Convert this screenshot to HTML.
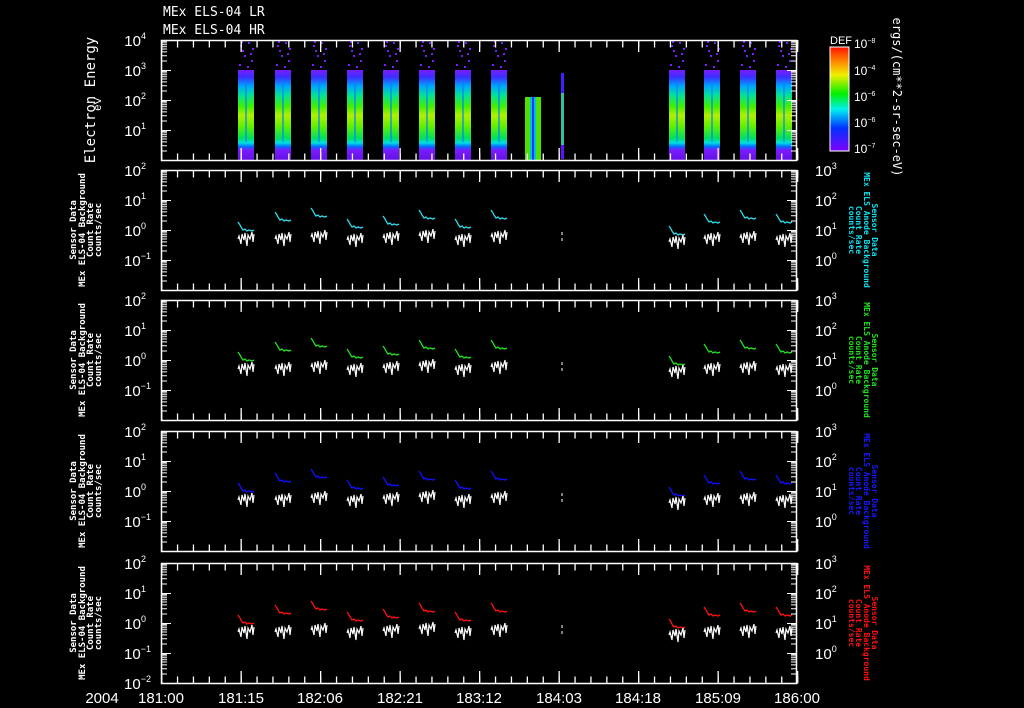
<!DOCTYPE html>
<html><head><meta charset="utf-8"><style>
html,body{margin:0;padding:0;background:#000;width:1024px;height:708px;overflow:hidden}
svg{display:block}
text{font-family:"Liberation Sans","DejaVu Sans",sans-serif;fill:#fff}
.t{font-size:15px;text-anchor:end}
.s{font-size:9px}
.m{font-family:"DejaVu Sans Mono","Liberation Mono",monospace;font-size:13px}
.l{font-family:"DejaVu Sans Mono","Liberation Mono",monospace;font-size:9px;font-weight:bold;text-anchor:middle}
.r{font-family:"DejaVu Sans Mono","Liberation Mono",monospace;font-size:8px;font-weight:bold;text-anchor:middle}
.b{font-size:15px;text-anchor:middle}
</style></head><body>
<svg width="1024" height="708" viewBox="0 0 1024 708" xmlns="http://www.w3.org/2000/svg">
<defs>
<linearGradient id="sp" x1="0" y1="70" x2="0" y2="161" gradientUnits="userSpaceOnUse">
<stop offset="0" stop-color="#7a1cff"/><stop offset="0.08" stop-color="#3a30ff"/><stop offset="0.17" stop-color="#00a0ff"/><stop offset="0.27" stop-color="#00e0a0"/><stop offset="0.4" stop-color="#40f000"/><stop offset="0.5" stop-color="#b0f000"/><stop offset="0.62" stop-color="#60f000"/><stop offset="0.75" stop-color="#00e060"/><stop offset="0.8" stop-color="#00e0e0"/><stop offset="0.84" stop-color="#0070ff"/><stop offset="0.88" stop-color="#7a1cff"/><stop offset="1" stop-color="#6010e0"/>
</linearGradient>
<linearGradient id="cb" x1="0" y1="0" x2="0" y2="1">
<stop offset="0" stop-color="#ff1000"/><stop offset="0.13" stop-color="#ff8000"/><stop offset="0.27" stop-color="#f0f000"/><stop offset="0.45" stop-color="#00f000"/><stop offset="0.6" stop-color="#00f0f0"/><stop offset="0.78" stop-color="#0030ff"/><stop offset="1" stop-color="#8000ff"/>
</linearGradient>
<g id="dec" stroke="#fff" stroke-width="1">
<path d="M161 1.4h6M161 2.9h6M161 4.7h6M161 6.7h6M161 9h6M161 11.9h6M161 15.7h6M161 21h6M791 1.4h6M791 2.9h6M791 4.7h6M791 6.7h6M791 9h6M791 11.9h6M791 15.7h6M791 21h6"/>
</g>
<g id="pf" fill="none" stroke="#fff">
<rect x="161.5" y="0.5" width="635" height="120" stroke-width="1.5"/>
<use href="#dec" y="0"/><use href="#dec" y="30"/><use href="#dec" y="60"/><use href="#dec" y="90"/>
<path d="M161 0.5h10M161 30.5h10M161 60.5h10M161 90.5h10M787 0.5h10M787 30.5h10M787 60.5h10M787 90.5h10"/>
<line x1="161" y1="4" x2="800" y2="4" stroke-width="7" stroke-dasharray="1.3 14.6"/>
<line x1="161" y1="117" x2="800" y2="117" stroke-width="7" stroke-dasharray="1.3 14.6"/>
<line x1="161" y1="6" x2="800" y2="6" stroke-width="12" stroke-dasharray="1.3 78.2"/>
<line x1="161" y1="114" x2="800" y2="114" stroke-width="12" stroke-dasharray="1.3 78.2"/>
</g>
<polyline id="cl" fill="none" stroke-width="1.3" points="0,52 2,55 3,57 5,60 7,59 9,61 11,60 14,61 16,60"/>
<polyline id="wl" fill="none" stroke="#fff" stroke-width="1.2" points="0,69 1,66 3,74 4,64 6,70 7,63 9,76 10,65 12,69 14,62 15,72 16,64"/>
<g id="tr">
<use href="#cl" x="238" y="0"/><use href="#wl" x="238" y="0"/>
<use href="#cl" x="275" y="-10"/><use href="#wl" x="275" y="0"/>
<use href="#cl" x="311" y="-14"/><use href="#wl" x="311" y="-2"/>
<use href="#cl" x="347" y="-3"/><use href="#wl" x="347" y="1"/>
<use href="#cl" x="383" y="-6"/><use href="#wl" x="383" y="-1"/>
<use href="#cl" x="419" y="-12"/><use href="#wl" x="419" y="-3"/>
<use href="#cl" x="455" y="-3"/><use href="#wl" x="455" y="1"/>
<use href="#cl" x="491" y="-12"/><use href="#wl" x="491" y="-2"/>
<use href="#cl" x="669" y="4"/><use href="#wl" x="669" y="3"/>
<use href="#cl" x="704" y="-8"/><use href="#wl" x="704" y="0"/>
<use href="#cl" x="740" y="-12"/><use href="#wl" x="740" y="-1"/>
<use href="#cl" x="776" y="-8"/><use href="#wl" x="776" y="1"/>
<path d="M562 62v3M562 68v3" stroke="#fff"/>
</g>
<g id="spb">
<rect x="0" y="70" width="16" height="91" fill="url(#sp)"/>
<rect x="7" y="82" width="2" height="60" fill="#0080ff" opacity="0.6"/>
<path d="M2 45h2v2h-2zM10 42h2v2h-2zM6 55h2v2h-2zM13 60h2v2h-2zM1 64h2v2h-2zM9 66h2v2h-2zM4 50h2v2h-2zM14 48h2v2h-2zM3 40h2v3h-2zM12 53h2v2h-2z" fill="#7a1cff"/>
</g>
</defs>

<text class="m" x="163" y="16">MEx ELS-04 LR</text>
<text class="m" x="163" y="34">MEx ELS-04 HR</text>

<use href="#spb" x="238"/><use href="#spb" x="275"/><use href="#spb" x="311"/><use href="#spb" x="347"/><use href="#spb" x="383"/><use href="#spb" x="419"/><use href="#spb" x="455"/><use href="#spb" x="491"/>
<use href="#spb" x="669"/><use href="#spb" x="704"/><use href="#spb" x="740"/><use href="#spb" x="776"/>
<rect x="525" y="97" width="16" height="64" fill="#50e000"/>
<rect x="530" y="97" width="6" height="64" fill="#00c0e0"/>
<rect x="532" y="97" width="2" height="64" fill="#3030ff"/>
<rect x="561" y="73" width="3" height="86" fill="#30c0a0"/>
<rect x="561" y="73" width="3" height="20" fill="#4020ff"/>
<rect x="561" y="145" width="3" height="14" fill="#6010ff"/>

<use href="#pf" y="40"/>
<use href="#pf" y="170"/>
<use href="#pf" y="300"/>
<use href="#pf" y="431"/>
<use href="#pf" y="563"/>

<g stroke="#30d8e8"><use href="#tr" y="170"/></g>
<g stroke="#20e020"><use href="#tr" y="300"/></g>
<g stroke="#1010ff"><use href="#tr" y="431"/></g>
<g stroke="#ff1010"><use href="#tr" y="563"/></g>

<g class="t">
<text x="146" y="46">10<tspan class="s" dy="-7">4</tspan></text>
<text x="146" y="76">10<tspan class="s" dy="-7">3</tspan></text>
<text x="146" y="106">10<tspan class="s" dy="-7">2</tspan></text>
<text x="146" y="136">10<tspan class="s" dy="-7">1</tspan></text>
</g>
<g id="ll" class="t">
<text x="146" y="176">10<tspan class="s" dy="-7">2</tspan></text>
<text x="146" y="206">10<tspan class="s" dy="-7">1</tspan></text>
<text x="146" y="236">10<tspan class="s" dy="-7">0</tspan></text>
<text x="151" y="266">10<tspan class="s" dy="-7">−1</tspan></text>
</g>
<use href="#ll" y="130"/><use href="#ll" y="261"/><use href="#ll" y="393"/>
<text class="t" x="151" y="689">10<tspan class="s" dy="-7">−2</tspan></text>

<g id="rl" style="font-size:15px">
<text x="815" y="176">10<tspan class="s" dy="-7">3</tspan></text>
<text x="815" y="206">10<tspan class="s" dy="-7">2</tspan></text>
<text x="815" y="236">10<tspan class="s" dy="-7">1</tspan></text>
<text x="815" y="266">10<tspan class="s" dy="-7">0</tspan></text>
</g>
<use href="#rl" y="130"/><use href="#rl" y="261"/><use href="#rl" y="393"/>

<text transform="translate(95,100) rotate(-90)" style="font-size:14px;text-anchor:middle;font-family:'DejaVu Sans Mono',monospace">Electron Energy</text>
<text transform="translate(101,104) rotate(-90)" style="font-size:11px;text-anchor:middle">eV</text>
<g id="lt">
<text class="l" transform="translate(76,230) rotate(-90)">Sensor Data</text>
<text class="l" transform="translate(85,230) rotate(-90)">MEx ELS-04 Background</text>
<text class="l" transform="translate(93,230) rotate(-90)">Count Rate</text>
<text class="l" transform="translate(101,230) rotate(-90)">counts/sec</text>
</g>
<use href="#lt" y="130"/><use href="#lt" y="261"/><use href="#lt" y="393"/>

<g id="rt">
<text class="r" transform="translate(872,230) rotate(90)">Sensor Data</text>
<text class="r" transform="translate(864,230) rotate(90)">MEx ELS Anode Background</text>
<text class="r" transform="translate(856,230) rotate(90)">Count Rate</text>
<text class="r" transform="translate(849,230) rotate(90)">counts/sec</text>
</g>
<use href="#rt" y="0" style="fill:#10e0f0"/>
<style>#rt text{fill:inherit}</style>
<g style="fill:#20e020"><use href="#rt" y="130"/></g>
<g style="fill:#1818ff"><use href="#rt" y="261"/></g>
<g style="fill:#ff1010"><use href="#rt" y="393"/></g>

<text x="830" y="44" style="font-size:11px">DEF</text>
<rect x="830" y="47" width="19" height="104" fill="url(#cb)" stroke="#fff"/>
<g style="font-size:12px">
<text x="854" y="48">10<tspan dy="-5" style="font-size:7px">−8</tspan></text>
<text x="854" y="75">10<tspan dy="-5" style="font-size:7px">−4</tspan></text>
<text x="854" y="101">10<tspan dy="-5" style="font-size:7px">−6</tspan></text>
<text x="854" y="127">10<tspan dy="-5" style="font-size:7px">−6</tspan></text>
<text x="854" y="153">10<tspan dy="-5" style="font-size:7px">−7</tspan></text>
</g>
<text transform="translate(893,97) rotate(90)" style="font-size:12px;text-anchor:middle;font-family:'DejaVu Sans Mono',monospace">ergs/(cm**2-sr-sec-eV)</text>

<text class="b" x="102" y="703">2004</text>
<text class="b" x="161" y="703">181:00</text>
<text class="b" x="241" y="703">181:15</text>
<text class="b" x="320" y="703">182:06</text>
<text class="b" x="400" y="703">182:21</text>
<text class="b" x="479" y="703">183:12</text>
<text class="b" x="559" y="703">184:03</text>
<text class="b" x="638" y="703">184:18</text>
<text class="b" x="718" y="703">185:09</text>
<text class="b" x="797" y="703">186:00</text>
</svg>
</body></html>
